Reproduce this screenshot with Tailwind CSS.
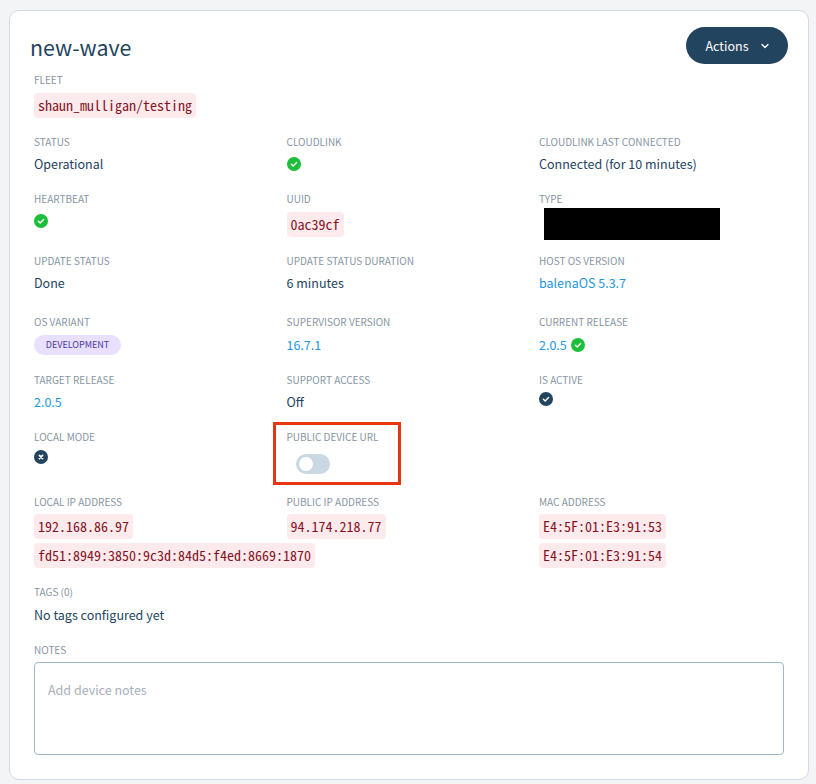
<!DOCTYPE html>
<html lang="en">
<head>
<meta charset="utf-8">
<title>new-wave</title>
<script src="https://cdn.jsdelivr.net/npm/@tailwindcss/browser@4"></script>
</head>
<body class="bg-[#f3f4f6]">
<svg class="hidden">
  <symbol id="ok" viewBox="0 0 14 14"><circle cx="7" cy="7" r="7" fill="currentColor"/><path d="M4.4 7.2 6.2 8.9 9.6 5.5" fill="none" stroke="#fff" stroke-width="1.4" stroke-linecap="round" stroke-linejoin="round"/></symbol>
  <symbol id="no" viewBox="0 0 14 14"><circle cx="7" cy="7" r="7" fill="currentColor"/><path d="M5.4 5.4 8.6 8.6M8.6 5.4 5.4 8.6" fill="none" stroke="#fff" stroke-width="1.7" stroke-linecap="round"/></symbol>
</svg>
<div class="flex h-[784px] w-[816px] pt-[10px] pl-[9px] font-['Noto_Sans_CJK_SC',sans-serif] text-[12.5px] leading-5 text-[#23445e]">
<main class="flex h-[770px] w-[800px] flex-col rounded-[10px] border border-[#d0dae6] bg-white pt-4 pl-6">
  <header class="-ml-1 flex h-[45px] justify-between pr-5">
    <h1 class="text-[21.4px] leading-10">new-wave</h1>
    <button class="flex h-[37px] w-[102px] items-center justify-center gap-3 rounded-full bg-[#23445e] text-white"><span>Actions</span><svg class="h-2 w-2" viewBox="0 0 8 8" fill="none" stroke="white" stroke-width="1.3" stroke-linecap="round" stroke-linejoin="round"><path d="M1 2.5 4 5.5 7 2.5"/></svg></button>
  </header>
  <div class="grid grid-cols-[252.5px_252.5px_245px] grid-rows-[62px_57px_62px_61px_58px_57px_65px_90px_58px_113px] [&_h2]:text-[10px] [&_h2]:leading-4 [&_h2]:text-[#8795a3] [&_code]:block [&_code]:w-fit [&_code]:rounded-[4px] [&_code]:bg-[#fdeaed] [&_code]:px-1 [&_code]:font-['Noto_Sans_Mono_CJK_SC','DejaVu_Sans_Mono',monospace] [&_code]:text-[14px] [&_code]:leading-[25px] [&_code]:text-[#85131d]">
    <section class="col-span-3"><h2>FLEET</h2><code class="mt-[5px]">shaun_mulligan/testing</code></section>

    <section><h2>STATUS</h2><p class="mt-1">Operational</p></section>
    <section><h2>CLOUDLINK</h2><svg class="mt-[7px] size-[14px] text-[#1dbf3a]"><use href="#ok"/></svg></section>
    <section><h2>CLOUDLINK LAST CONNECTED</h2><p class="mt-1">Connected (for 10 minutes)</p></section>

    <section><h2>HEARTBEAT</h2><svg class="mt-[7px] size-[14px] text-[#1dbf3a]"><use href="#ok"/></svg></section>
    <section><h2>UUID</h2><code class="mt-[5px]">0ac39cf</code></section>
    <section><h2>TYPE</h2><div class="mt-px ml-[5px] h-8 w-44 bg-black"></div></section>

    <section><h2>UPDATE STATUS</h2><p class="mt-1">Done</p></section>
    <section><h2>UPDATE STATUS DURATION</h2><p class="mt-1">6 minutes</p></section>
    <section><h2>HOST OS VERSION</h2><p class="mt-1 text-[#2297de]">balenaOS 5.3.7</p></section>

    <section><h2>OS VARIANT</h2><div class="mt-[5px] h-5 w-[87px] rounded-full bg-[#e8e0fe] text-center text-[9px] leading-5 text-[#4b3a9c]"><span>DEVELOPMENT</span></div></section>
    <section><h2>SUPERVISOR VERSION</h2><p class="mt-[5px] text-[#2297de]">16.7.1</p></section>
    <section><h2>CURRENT RELEASE</h2><div class="mt-[5px] flex h-5 items-center gap-1 text-[#2297de]"><p>2.0.5</p><svg class="size-[14px] text-[#1dbf3a]"><use href="#ok"/></svg></div></section>

    <section><h2>TARGET RELEASE</h2><p class="mt-1 text-[#2297de]">2.0.5</p></section>
    <section><h2>SUPPORT ACCESS</h2><p class="mt-1">Off</p></section>
    <section><h2>IS ACTIVE</h2><svg class="mt-1 size-[14px]"><use href="#ok"/></svg></section>

    <section><h2>LOCAL MODE</h2><svg class="mt-[5px] size-[14px]"><use href="#no"/></svg></section>
    <section class="relative col-span-2"><h2>PUBLIC DEVICE URL</h2>
      <div class="mt-[9px] ml-[9px] flex h-5 w-[34px] items-center rounded-full bg-[#cad8e4] pl-[3px]"><div class="size-[14px] rounded-full bg-white"></div></div>
      <div class="absolute -top-[7px] -left-[14px] h-[63px] w-[128px] border-[3px] border-[#e93410]"></div>
    </section>

    <section><h2>LOCAL IP ADDRESS</h2><code class="mt-1">192.168.86.97</code><code class="mt-1">fd51:8949:3850:9c3d:84d5:f4ed:8669:1870</code></section>
    <section><h2>PUBLIC IP ADDRESS</h2><code class="mt-1">94.174.218.77</code></section>
    <section><h2>MAC ADDRESS</h2><code class="mt-1">E4:5F:01:E3:91:53</code><code class="mt-1">E4:5F:01:E3:91:54</code></section>

    <section class="col-span-3"><h2>TAGS (0)</h2><p class="mt-[5px]">No tags configured yet</p></section>
    <section class="col-span-3"><h2>NOTES</h2><div class="mt-1 h-[93px] rounded-[4px] border border-[#9bb8cf] px-[13px] py-[17px] text-[#a7b0bb]">Add device notes</div></section>
  </div>
</main>
</div>
</body>
</html>
